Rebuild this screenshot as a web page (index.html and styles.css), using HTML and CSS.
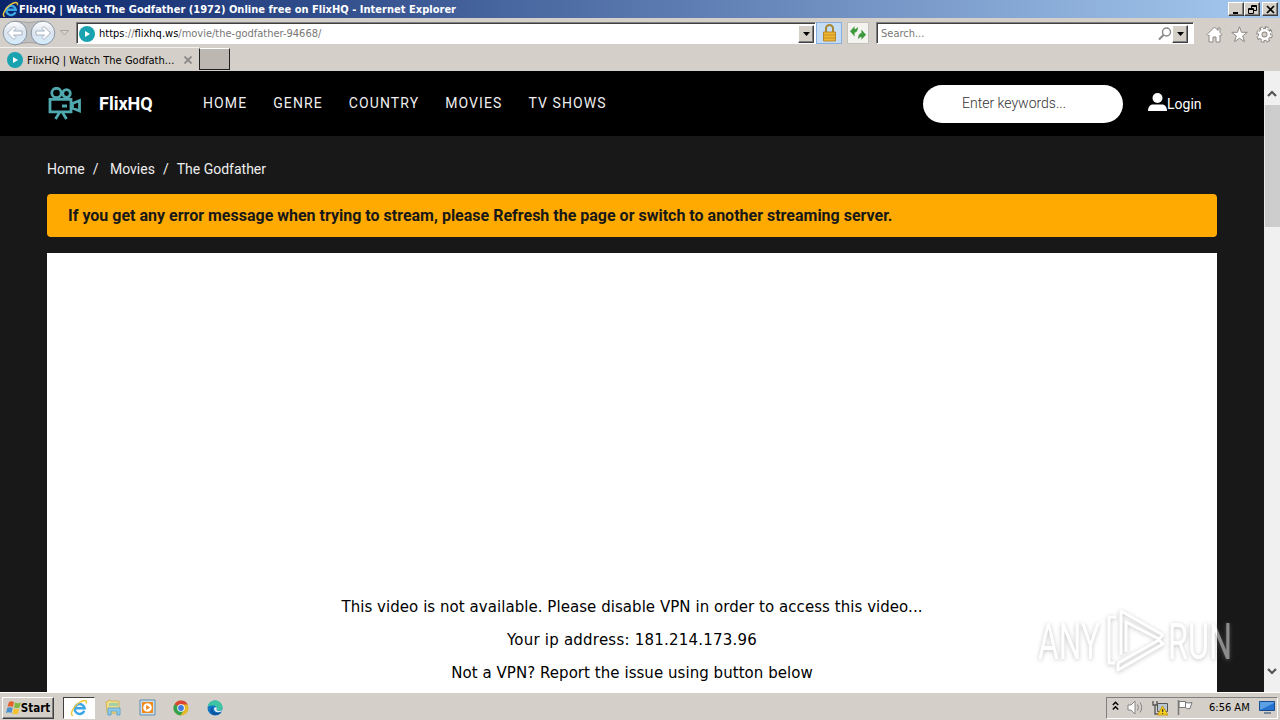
FILE: index.html
```
<!DOCTYPE html>
<html lang="en">
  <head>
    <meta charset="UTF-8" />
    <meta name="viewport" content="width=device-width, initial-scale=1.0" />
    <title>FlixHQ | Watch The Godfather (1972) Online free on FlixHQ</title>
    <link rel="stylesheet" href="styles.css">
  </head>
  <body>
    <!-- shared symbols -->
    <svg class="defs" width="0" height="0">
      <symbol id="ie" viewBox="0 0 18 18">
        <path d="M14.300 11.800A5 4.900 0 1 1 14.600 9.300H6" fill="none" stroke="#3ba6e6" stroke-width="2.500" />
        <path d="M3 16.300C-.5 16.500 2.500 8.500 8 4.500C13 .8 17.300 .5 16.300 4.500" fill="none" stroke="#f0c63c" stroke-width="1.500" />
      </symbol>
      <symbol id="play" viewBox="0 0 16 16">
        <circle cx="8" cy="8" r="8" fill="#19a3b0" />
        <path d="M6 5v6L11 8z" fill="#fff" />
      </symbol>
      <symbol id="down" viewBox="0 0 7 4">
        <path d="M0 0h7L3.500 4z" />
      </symbol>
    </svg>

    <header class="titlebar">
      <svg class="ie-icon"><use href="#ie" /></svg>
      <span class="title">FlixHQ | Watch The Godfather (1972) Online free on FlixHQ - Internet Explorer</span>
      <div class="win-buttons">
        <button><svg width="9" height="9"><path d="M1 7h5v2H1z" /></svg></button>
        <button><svg width="9" height="9" fill="none" stroke="#000"><path d="M3.500 3V.5h5v5H6M3 1.500h6M.5 3.500h5v5h-5zM0 4.500h6" /></svg></button>
        <button class="close"><svg width="9" height="9" stroke="#000" stroke-width="1.700"><path d="M1 1l7 7M8 1L1 8" /></svg></button>
      </div>
    </header>

    <div class="navbar">
      <svg class="arrows" width="56" height="28" viewBox="0 0 56 28">
        <defs>
          <linearGradient id="glass" x2="0" y2="1">
            <stop offset="0" stop-color="#fff" />
            <stop offset=".45" stop-color="#dde4ed" />
            <stop offset="1" stop-color="#d4ecfc" />
          </linearGradient>
        </defs>
        <path d="M15 2Q29 5 43 2V26Q29 21 15 26z" fill="#bfbfbf" stroke="#a4a4a4" />
        <circle cx="15" cy="14" r="11.800" fill="url(#glass)" stroke="#8897a8" />
        <circle cx="43" cy="14" r="11.800" fill="url(#glass)" stroke="#8897a8" />
        <path d="M7.500 14l6.500-6.500 2 2L13.500 12H22v4h-8.500l2.500 2.500-2 2z" fill="#fff" stroke="#a5b2c3" />
        <path d="M50.500 14l-6.500-6.500-2 2 2.500 2.500H36v4h8.500L42 18.500l2 2z" fill="#fff" stroke="#a5b2c3" />
      </svg>
      <svg class="history" width="9" height="6"><path d="M.5 .5h8L4.500 5z" fill="#d8d4cc" stroke="#aaa6a0" /></svg>
      <div class="field address">
        <svg class="favicon"><use href="#play" /></svg>
        <span class="url"><b>https</b>://<b>flixhq.ws</b>/movie/the-godfather-94668/</span>
        <button class="drop"><svg width="7" height="4"><use href="#down" /></svg></button>
      </div>
      <div class="lock">
        <svg width="15" height="18" viewBox="0 0 15 18">
          <path d="M4 9V4.500a3.500 3.500 0 0 1 7 0V9" fill="none" stroke="#a98632" stroke-width="2" />
          <path d="M1.500 8h12v9h-12z" fill="#efb832" stroke="#b8862a" />
          <path d="M2 11h11M2 14h11" stroke="#c58d20" />
        </svg>
      </div>
      <div class="refresh">
        <svg width="16" height="16" viewBox="0 0 14 14" fill="#3f9a3f">
          <path d="M0 5.500L4 1v2.500c1 0 2-.5 2.500-2C7.500 4 6 6.500 4 6.800V10z" />
          <path d="M14 8.500L10 4v3c-2 .5-3.500 3-2.500 5.500.5-1.500 1.500-2 2.500-2V13z" />
        </svg>
      </div>
      <div class="field search">
        <span>Search...</span>
        <svg width="14" height="14" fill="none" stroke="#888"><circle cx="8.500" cy="5" r="4" stroke-width="1.500" /><path d="M5.500 8L1 12.500" stroke-width="2" /></svg>
        <button class="drop"><svg width="7" height="4"><use href="#down" /></svg></button>
      </div>
      <div class="tools">
        <svg width="17" height="17" viewBox="0 0 17 17" fill="#fff" stroke="#8d8984"><path d="M8.500 1L1 8.500l1.200 1.200L3 9v7h4v-5h3v5h4V9l.8.7L16 8.500l-2-2V2h-2v2.500z" /></svg>
        <svg width="17" height="17" viewBox="0 0 17 17" fill="#fff" stroke="#8d8984"><path d="M8.500 .8l2 5.500h5.800l-4.600 3.600 1.700 5.800-4.900-3.500-4.900 3.500 1.700-5.800L.7 6.300h5.800z" /></svg>
        <svg width="17" height="17" viewBox="0 0 17 17" fill="none">
          <circle cx="8.500" cy="8.500" r="6.600" stroke="#8d8984" stroke-width="3.400" stroke-dasharray="3.400 1.784" />
          <circle cx="8.500" cy="8.500" r="4.300" stroke="#8d8984" stroke-width="4.400" />
          <circle cx="8.500" cy="8.500" r="4.300" stroke="#fff" stroke-width="2.600" />
          <circle cx="8.500" cy="8.500" r="6" stroke="#fff" stroke-width="2.600" stroke-dasharray="1.800 2.912" stroke-dashoffset="-.65" />
        </svg>
      </div>
    </div>

    <div class="tabs">
      <div class="tab">
        <svg class="favicon"><use href="#play" /></svg>
        <span>FlixHQ | Watch The Godfath...</span>
        <svg width="8" height="8" stroke="#888" stroke-width="1.800"><path d="M.5 .5l7 7M7.500 .5l-7 7" /></svg>
      </div>
      <div class="new-tab"></div>
    </div>

    <div class="viewport">
      <div class="page">
        <nav class="site-nav">
          <svg class="logo" width="35" height="34" viewBox="0 0 35 34" fill="none" stroke="#4fa9ae" stroke-width="2.800">
            <circle cx="9.500" cy="6" r="4.700" />
            <circle cx="19.500" cy="6.500" r="3.800" />
            <path d="M3 12.300h21v12.500H3zM25.500 16.500l7-3v10.500l-7-3z" />
            <path d="M15 19h5M12.500 25.500L8.500 32M15.500 25.500l4 6.500" />
          </svg>
          <span class="brand">FlixHQ</span>
          <ul class="menu">
            <li>HOME</li>
            <li>GENRE</li>
            <li>COUNTRY</li>
            <li>MOVIES</li>
            <li>TV SHOWS</li>
          </ul>
          <div class="keywords">Enter keywords...</div>
          <div class="login">
            <svg width="19" height="18"><circle cx="9.500" cy="5" r="5" fill="#fff" /><path d="M0 18c0-4 2-6.500 5-6.500h9c3 0 5 2.500 5 6.500z" fill="#fff" /></svg>
            <span>Login</span>
          </div>
        </nav>
        <main class="content">
          <div class="breadcrumb">
            <span>Home</span><i>/</i><span class="crumb">Movies</span><i>/</i><span>The Godfather</span>
          </div>
          <div class="alert">If you get any error message when trying to stream, please Refresh the page or switch to another streaming server.</div>
          <div class="player">
            <p>This video is not available. Please disable VPN in order to access this video...</p>
            <p class="ip">Your ip address: 181.214.173.96</p>
            <p>Not a VPN? Report the issue using button below</p>
          </div>
        </main>
      </div>
      <div class="scrollbar">
        <svg width="10" height="7" fill="none" stroke="#555" stroke-width="2.200"><path d="M1 6l4-4 4 4" /></svg>
        <div class="thumb"></div>
        <svg class="bottom" width="10" height="7" fill="none" stroke="#555" stroke-width="2.200"><path d="M1 1l4 4 4-4" /></svg>
      </div>
    </div>

    <footer class="taskbar">
      <button class="start">
        <svg width="16" height="16" viewBox="0 0 16 16">
          <path d="M3 2q2-1.500 5 0L7 7Q4 5.500 1.500 7z" fill="#e6602c" />
          <path d="M9 2.500q3 1.500 6 0L13.500 7.500q-3 1.500-5.500 0z" fill="#7fb843" />
          <path d="M1.200 8q3-1.500 5.500 0L5.500 13Q3 11.500 0 13z" fill="#4b91cf" />
          <path d="M7.700 8.500q2.500 1.500 5.500 0L12 13.500q-3 1.500-5.500 0z" fill="#f6c12f" />
        </svg>
        <span>Start</span>
      </button>
      <div class="apps">
        <div class="app active"><svg width="18" height="18"><use href="#ie" /></svg></div>
        <div class="app">
          <svg width="17" height="17" viewBox="0 0 17 17"><path d="M1 3l4-2 1 1h8v12H2z" fill="#f3dc82" stroke="#cdb562" /><path d="M4 4h9v3H4z" fill="#9fd0a8" /><path d="M3 16V9h12v7h-3v-4H6v4z" fill="#8ccbed" stroke="#63a5cb" /></svg>
        </div>
        <div class="app">
          <svg width="17" height="17" viewBox="0 0 17 17"><path d="M1 1h15v15H1z" fill="#c9dfef" stroke="#608cb0" /><path d="M3 3h11v11H3z" fill="#f28a1c" /><circle cx="8.500" cy="8.500" r="4.300" fill="#fff" /><path d="M7.200 6v5l4-2.500z" fill="#f28a1c" /></svg>
        </div>
        <div class="app">
          <svg width="16" height="16" viewBox="0 0 16 16"><circle cx="8" cy="8" r="7.500" fill="#e5b928" /><path d="M8 8L1.500 4.200A7.500 7.500 0 0 1 14.700 4.500H8z" fill="#d94435" /><path d="M8 8L1.500 4.200A7.500 7.500 0 0 0 7.500 15.500L11 10z" fill="#35a04d" /><circle cx="8" cy="8" r="3.800" fill="#fff" /><circle cx="8" cy="8" r="2.900" fill="#4279de" /></svg>
        </div>
        <div class="app">
          <svg width="16" height="16" viewBox="0 0 16 16"><circle cx="8" cy="8" r="7.500" fill="#1476c6" /><path d="M.6 7C1.500-1.500 15-2 15.500 7.500c0 3.500-4.500 4-6 2.500 1.500-2-.5-5-4-4.500C3 5.500 1.500 6 .6 7z" fill="#40c5a2" /><path d="M6 7c-2 4 2 7.500 8.500 5-4 5.500-12 3-11-2C4 8 5 7 6 7z" fill="#0c559e" /><path d="M9.500 10c.5-1 .5-2-.5-3l-2 1c-.5 3 3 5.500 7.500 3.500l.5-1.500c-2 1.500-4.500 1-5.500 0z" fill="#e3eef2" /></svg>
        </div>
      </div>
      <div class="tray">
        <svg class="chevron" width="7" height="10" fill="none" stroke="#000" stroke-width="1.400"><path d="M.8 4L3.500 1.300 6.200 4M.8 8.500l2.700-2.700 2.700 2.700" /></svg>
        <svg width="17" height="15" fill="#fff" stroke="#858585"><path d="M1 5h3l4-4v13l-4-4H1z" /><path d="M10.500 4.500q2 3 0 6M13 2.500q3.500 5 0 10" fill="none" /></svg>
        <svg width="17" height="16" viewBox="0 0 17 16"><path d="M5.500 3.500h10v8h-10z" fill="#b8c6d3" stroke="#555" /><path d="M1 1v4h4V1M3 5v9h3" fill="none" stroke="#555" stroke-width="1.300" /><path d="M10.500 6L16 15H5.500z" fill="#f5cf20" stroke="#c89b14" /><path d="M10.700 9v3M10.700 13v1" stroke="#222" /></svg>
        <svg width="17" height="15" viewBox="0 0 17 15"><path d="M2 1.500h6.500v6H2zM8.500 2.500q3 1 6.500 0l-2 6q-3 1-4.500-1" fill="#fff" stroke="#777" /><path d="M1.500 0v15" stroke="#777" stroke-width="1.500" /></svg>
        <span class="clock">6:56 AM</span>
        <svg width="16" height="13" viewBox="0 0 16 13"><path d="M.5 .5h15v9H.5z" fill="#2872cf" stroke="#164c90" /><path d="M1 9L15 2V1H1z" fill="#5b9fe4" /><path d="M5 12h7" stroke="#789" stroke-width="2" /></svg>
      </div>
    </footer>

    <!-- watermark floats over everything -->
    <svg class="watermark" width="220" height="80" viewBox="0 0 220 80">
      <g fill="#fff">
        <text x="8" y="56" textLength="62" lengthAdjust="spacingAndGlyphs">ANY</text>
        <text x="138" y="56" textLength="64" lengthAdjust="spacingAndGlyphs">RUN</text>
      </g>
      <path d="M91 52V8L133 32l-4 4L96 19v30M86 14h-7V60h6M88 60V67L133 41l-4-4L88 60" fill="none" stroke="#fff" stroke-width="3" stroke-linejoin="round" />
    </svg>
  </body>
</html>
```
FILE: styles.css
```
* {
  box-sizing: border-box;
}
body {
  margin: 0;
  width: 1280px;
  height: 720px;
  overflow: hidden;
  display: flex;
  flex-direction: column;
  background: #d4cfc8;
  font-family: "DejaVu Sans Condensed", "DejaVu Sans", sans-serif;
  font-stretch: condensed;
  font-size: 11px;
  color: #000;
  position: relative;
}
svg {
  display: block;
  flex: none;
}
button {
  padding: 0;
  border: 1px solid;
  border-color: #fff #404040 #404040 #fff;
  box-shadow: inset -1px -1px #808080;
  background: #d4d0c8;
  font: inherit;
  display: flex;
  align-items: center;
  justify-content: center;
}
.defs {
  position: absolute;
}
.titlebar {
  height: 18px;
  display: flex;
  align-items: center;
  padding: 0 2px;
  background: linear-gradient(90deg, #0a246a, #a6caf0);
  color: #fff;
}
.ie-icon {
  width: 17px;
  height: 17px;
}
.title {
  flex: 1;
  font-weight: bold;
  letter-spacing: 0.02px;
  white-space: nowrap;
}
.win-buttons {
  display: flex;
}
.win-buttons button {
  width: 16px;
  height: 14px;
}
.win-buttons .close {
  margin-left: 2px;
}
.navbar {
  height: 29px;
  display: flex;
  align-items: center;
  padding: 1px 7px 0 0;
}
.history {
  margin: 0 7px 0 4px;
}
.field {
  height: 22px;
  display: flex;
  align-items: center;
  background: #fff;
  border: 1px solid;
  border-color: #808080 #fff #fff #808080;
  box-shadow: inset 1px 1px #404040;
  color: #777;
}
.address {
  width: 740px;
  padding: 1px 1px 0 2px;
}
.favicon {
  width: 16px;
  height: 16px;
}
.url {
  flex: 1;
  margin-left: 4px;
}
.url b {
  font-weight: normal;
  color: #000;
}
.drop {
  width: 16px;
  height: 18px;
}
.lock,
.refresh {
  display: flex;
  align-items: center;
  justify-content: center;
  height: 22px;
}
.lock {
  width: 26px;
  background: #c5dcf5;
  border: 1px solid #87aede;
}
.refresh {
  width: 22px;
  margin: 0 7px 0 5px;
  background: #f4f3f0;
  border: 1px solid #c4c0ba;
}
.search {
  width: 318px;
  padding: 1px 5px 0 4px;
}
.search span {
  flex: 1;
}
.tools {
  display: flex;
  gap: 8px;
  margin: 3px 0 0 auto;
}
.tabs {
  height: 24px;
  display: flex;
}
.tab {
  width: 199px;
  display: flex;
  align-items: center;
  padding: 1px 7px 0 7px;
  border-top: 1px solid #f4f2ee;
}
.tab span {
  flex: 1;
  margin-left: 4px;
  letter-spacing: 0.03px;
  white-space: nowrap;
}
.new-tab {
  width: 31px;
  height: 22px;
  margin-top: 1px;
  background: #bcb7b1;
  border: 1px solid;
  border-color: #fff #202020 #202020 #202020;
}
.viewport {
  height: 621px;
  display: flex;
  font-family: Roboto, sans-serif;
  font-stretch: normal;
}
.page {
  width: 1264px;
  background: #181818;
  color: #fff;
}
.site-nav {
  height: 65px;
  display: flex;
  align-items: center;
  padding-left: 47px;
  background: #000;
}
.brand {
  width: 104px;
  margin-left: 17px;
  font-size: 18px;
  font-weight: 700;
}
.menu {
  display: flex;
  gap: 26px;
  margin: 0;
  padding: 0 0 2px;
  list-style: none;
  font-size: 14px;
  letter-spacing: 1.1px;
  color: #eee;
  white-space: nowrap;
}
.keywords {
  width: 200px;
  height: 38px;
  margin-left: auto;
  padding-left: 39px;
  border-radius: 19px;
  background: #fff;
  color: #333;
  font-size: 14px;
  font-weight: 300;
  line-height: 37px;
}
.login {
  width: 116px;
  margin-left: 25px;
  display: flex;
  align-items: center;
  font-size: 14px;
}
.login svg {
  margin-bottom: 3px;
}
.content {
  padding: 23px 47px 0;
}
.breadcrumb {
  height: 35px;
  font-size: 14px;
  line-height: 20px;
  color: #eee;
}
.breadcrumb i {
  margin: 0 8px;
  font-style: normal;
}
.crumb {
  margin-left: 3.5px;
}
.alert {
  height: 43px;
  padding-left: 21px;
  border-radius: 4px;
  background: #fa0;
  color: #181818;
  font-size: 16px;
  font-weight: 700;
  line-height: 43px;
}
.player {
  height: 439px;
  margin-top: 16px;
  padding-top: 344px;
  background: #fff;
  color: #000;
  font-family: "DejaVu Sans", Verdana, sans-serif;
  font-size: 15px;
  letter-spacing: 0.05px;
  line-height: 21px;
  text-align: center;
}
.player p {
  margin: 0 0 12px;
}
.player .ip {
  letter-spacing: 0.22px;
}
.scrollbar {
  width: 16px;
  display: flex;
  flex-direction: column;
  align-items: center;
  padding: 19px 0 17px;
  background: #f0f0f0;
}
.thumb {
  width: 15px;
  height: 122px;
  margin-top: 8px;
  background: #cdcdcd;
}
.bottom {
  margin-top: auto;
}
.taskbar {
  height: 28px;
  display: flex;
  align-items: center;
  padding: 2px 2px 0;
  border-top: 1px solid #fff;
}
.start {
  width: 52px;
  height: 22px;
  font-size: 11.5px;
  font-weight: bold;
}
.start span {
  margin-left: -1px;
}
.apps {
  display: flex;
  gap: 2px;
  margin-left: 9px;
}
.app {
  width: 32px;
  height: 22px;
  display: flex;
  align-items: center;
  justify-content: center;
}
.active {
  background: #fff;
  border: 1px solid;
  border-color: #404040 #fff #fff #404040;
}
.tray {
  width: 172px;
  height: 22px;
  margin-left: auto;
  padding: 0 2px 0 5px;
  display: flex;
  align-items: center;
  gap: 8px;
  border: 1px solid;
  border-color: #808080 #fff #fff #808080;
}
.chevron {
  margin-bottom: 3px;
}
.clock {
  width: 43px;
  margin-left: 7px;
  white-space: nowrap;
}
.watermark {
  position: absolute;
  left: 1030px;
  top: 603px;
  opacity: 0.5;
  filter: drop-shadow(0 1px 2px #888);
  font-family: Roboto, sans-serif;
  font-stretch: normal;
  font-size: 50px;
  font-weight: 400;
}
```
